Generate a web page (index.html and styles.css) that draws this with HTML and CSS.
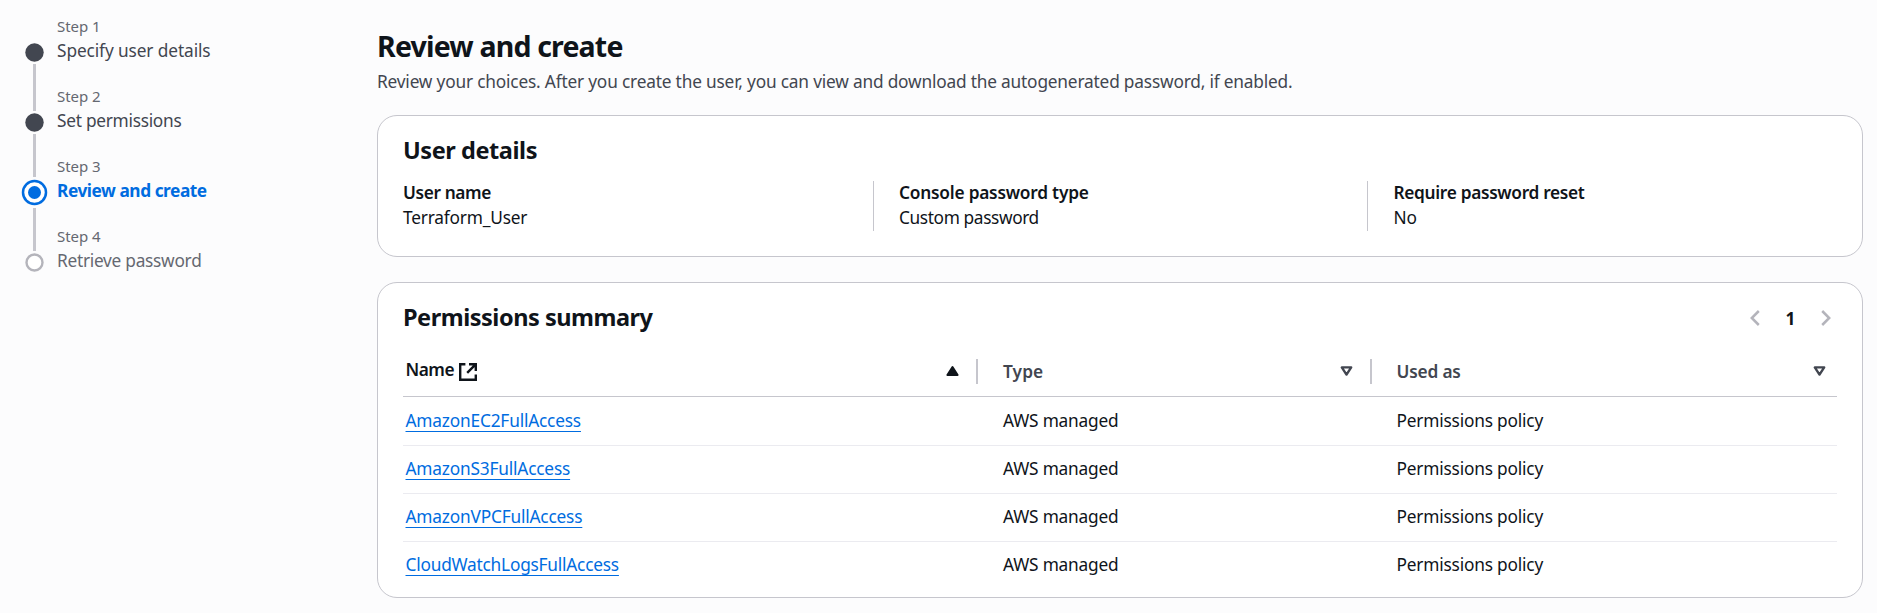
FILE: index.html
```
<!DOCTYPE html>
<html lang="en">
<head>
<meta charset="utf-8">
<title>Review and create</title>
<link rel="stylesheet" href="styles.css">
</head>
<body>
<div class="page">
  <nav class="steps">
    <svg class="rail" width="27" height="260" viewBox="0 0 27 260">
      <g fill="#c6c6cd">
        <rect x="12" y="48" width="3" height="47"/>
        <rect x="12" y="118" width="3" height="43"/>
        <rect x="12" y="192" width="3" height="43"/>
      </g>
      <circle cx="13.5" cy="36.5" r="9.2" fill="#424650"/>
      <circle cx="13.5" cy="106.5" r="9.2" fill="#424650"/>
      <circle cx="13.5" cy="176.5" r="11.5" fill="#fff" stroke="#006ce0" stroke-width="2.5"/>
      <circle cx="13.5" cy="176.5" r="6.5" fill="#006ce0"/>
      <circle cx="13.5" cy="246.5" r="8" fill="#fff" stroke="#b4b4bb" stroke-width="2.4"/>
    </svg>
    <ol class="step-list">
      <li class="step"><span class="step-label">Step 1</span><span class="step-title specify">Specify user details</span></li>
      <li class="step"><span class="step-label">Step 2</span><span class="step-title">Set permissions</span></li>
      <li class="step active"><span class="step-label">Step 3</span><span class="step-title">Review and create</span></li>
      <li class="step pending"><span class="step-label">Step 4</span><span class="step-title">Retrieve password</span></li>
    </ol>
  </nav>

  <main class="content">
    <h1 class="title">Review and create</h1>
    <p class="description">Review your choices. After you create the user, you can view and download the autogenerated password, if enabled.</p>

    <section class="card">
      <h2 class="card-title details-title">User details</h2>
      <div class="fields">
        <div class="field"><div class="field-label user-label">User name</div><div>Terraform_User</div></div>
        <div class="field"><div class="field-label">Console password type</div><div class="custom">Custom password</div></div>
        <div class="field"><div class="field-label reset-label">Require password reset</div><div>No</div></div>
      </div>
    </section>

    <section class="card">
      <div class="card-header">
        <h2 class="card-title">Permissions summary</h2>
        <div class="pager">
          <svg width="12" height="18" viewBox="0 0 12 18"><path d="M9.8 2 2.8 9l7 7" fill="none" stroke="#b4b4bb" stroke-width="2.5"/></svg>
          <span class="page-number">1</span>
          <svg width="12" height="18" viewBox="0 0 12 18"><path d="m2.2 2 7 7-7 7" fill="none" stroke="#b4b4bb" stroke-width="2.5"/></svg>
        </div>
      </div>
      <div class="table">
        <div class="row head">
          <div class="cell sorted">
            <span class="name">Name
              <svg class="external" width="18" height="18" viewBox="0 0 18 18" fill="none" stroke="#0f141a" stroke-width="2.4"><path d="M6.4 1.2H1.2v15.6h15.6v-5.2M10 1.2h6.8V8M16.6 1.4 8.2 9.8"/></svg>
            </span>
            <svg class="sort" width="13" height="12" viewBox="0 0 13 12"><path d="M6.5 2 11.6 10H1.4z" fill="#0f141a" stroke="#0f141a" stroke-width="2" stroke-linejoin="round"/></svg>
          </div>
          <div class="cell"><span class="type">Type</span><svg class="sort" width="13" height="12" viewBox="0 0 13 12"><path d="M1.8 2.4h9.4L6.5 9.6z" fill="none" stroke="#424650" stroke-width="2.4" stroke-linejoin="round"/></svg></div>
          <div class="cell"><span>Used as</span><svg class="sort" width="13" height="12" viewBox="0 0 13 12"><path d="M1.8 2.4h9.4L6.5 9.6z" fill="none" stroke="#424650" stroke-width="2.4" stroke-linejoin="round"/></svg></div>
        </div>
        <div class="row"><div class="cell"><a class="link">AmazonEC2FullAccess</a></div><div class="cell managed">AWS managed</div><div class="cell">Permissions policy</div></div>
        <div class="row"><div class="cell"><a class="link">AmazonS3FullAccess</a></div><div class="cell managed">AWS managed</div><div class="cell">Permissions policy</div></div>
        <div class="row"><div class="cell"><a class="link">AmazonVPCFullAccess</a></div><div class="cell managed">AWS managed</div><div class="cell">Permissions policy</div></div>
        <div class="row"><div class="cell"><a class="link logs">CloudWatchLogsFullAccess</a></div><div class="cell managed">AWS managed</div><div class="cell">Permissions policy</div></div>
      </div>
    </section>
  </main>
</div>
</body>
</html>
```
FILE: styles.css
```
* { box-sizing: border-box; }

body {
  margin: 0;
  background: #fcfcfd;
  color: #0f141a;
  font: 400 17.3px/25px "Noto Sans", sans-serif;
  letter-spacing: -0.19px;
}

svg { display: block; flex: none; }

.page {
  display: grid;
  grid-template-columns: 356px 1fr;
  min-height: 613px;
  padding: 0 14px 0 21px;
}

/* Wizard navigation */
.steps { display: flex; align-items: flex-start; gap: 9px; padding-top: 16px; }

.step-list {
  display: grid;
  gap: 23px;
  margin: 0;
  padding: 0;
  list-style: none;
}

.step { display: grid; gap: 2px; }

.step-label {
  color: #656871;
  font-size: 15px;
  line-height: 20px;
  letter-spacing: -0.05px;
}

.step-title { color: #424650; letter-spacing: -0.27px; }
.specify { letter-spacing: -0.11px; }
.active .step-title { color: #006ce0; font-weight: 700; letter-spacing: -0.45px; }
.pending .step-title { color: #656871; }

/* Page heading */
.content { padding-top: 29px; }

.title {
  margin: 0 0 5px;
  font-size: 28.5px;
  font-weight: 700;
  line-height: 35px;
  letter-spacing: -0.82px;
}

.description { margin: 0 0 21px; color: #424650; }

/* Cards */
.card {
  padding: 18px 25px 25px;
  border: 1px solid #c6c6cd;
  border-radius: 20px;
  background: #fff;
}

.card + .card { height: 316px; margin-top: 25px; padding-bottom: 0; }

.card-title {
  height: 31px;
  margin: 0;
  padding-top: 1px;
  font-size: 23.5px;
  font-weight: 700;
  line-height: 31px;
  letter-spacing: -0.47px;
}

.details-title { letter-spacing: -0.43px; }

.fields {
  display: grid;
  grid-template-columns: 470px 494px 1fr;
  height: 50px;
  margin-top: 16px;
}

.field > div { position: relative; top: -1px; }
.field + .field { padding-left: 25px; border-left: 1px solid #c6c6cd; }
.field:last-child { padding-left: 25.5px; }
.field-label { font-weight: 600; letter-spacing: -0.22px; }
.user-label { letter-spacing: -0.38px; }
.reset-label { letter-spacing: -0.32px; }
.custom { letter-spacing: -0.38px; }

.card-header { display: flex; justify-content: space-between; }

.pager {
  display: flex;
  align-items: center;
  gap: 25px;
  height: 34px;
  margin-bottom: -3px;
  padding-right: 5.5px;
}

.page-number { width: 9px; font-weight: 700; }

/* Permissions table */
.row {
  display: grid;
  grid-template-columns: 575px 394px 1fr;
  height: 48px;
  padding-top: 10px;
  border-bottom: 1px solid #ebebf0;
}

.head {
  height: 65px;
  padding-top: 27px;
  border-bottom-color: #c6c6cd;
  color: #424650;
  font-weight: 600;
}

.head + .row { height: 49px; padding-top: 11px; }
.row:last-child { border-bottom: 0; }

.cell { padding-left: 24.5px; }
.cell:first-child { padding-left: 2.5px; }
.cell:nth-child(2) { padding-left: 25px; }

.head .cell {
  display: flex;
  justify-content: space-between;
  height: 25px;
  padding-right: 17px;
  border-right: 2px solid #c6c6cd;
}

.head .cell:last-child { padding-right: 11px; border-right: 0; }
.head .sorted { color: #0f141a; }

.sort { margin-top: 6px; }
.name { display: flex; gap: 5px; margin-top: -2px; letter-spacing: -0.5px; }
.external { margin-top: 6px; }
.type { letter-spacing: 0.1px; }
.managed { letter-spacing: -0.19px; }

.link {
  color: #006ce0;
  text-decoration: underline;
  text-decoration-thickness: 1px;
  text-decoration-skip-ink: none;
  text-underline-offset: 4px;
}

.logs { letter-spacing: -0.22px; }
```
